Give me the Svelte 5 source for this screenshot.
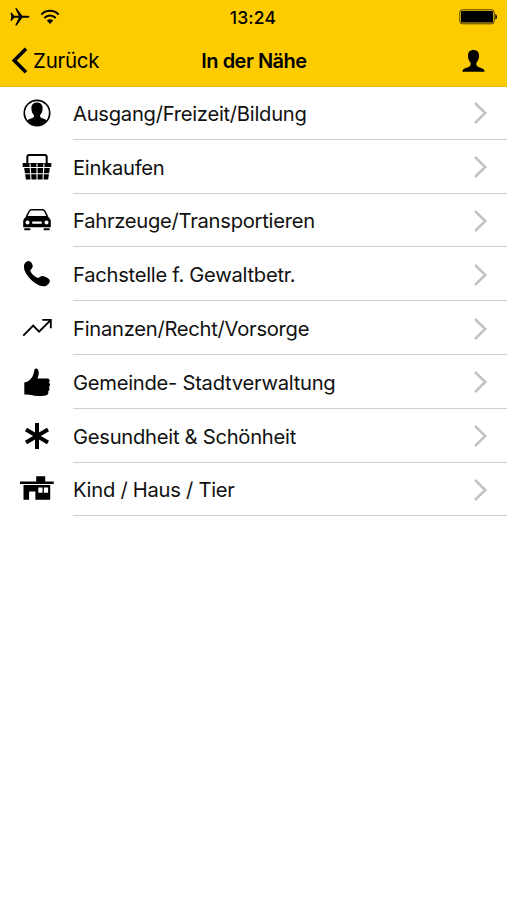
<script>
  const categories = [
    { icon: 'person', label: 'Ausgang/Freizeit/Bildung' },
    { icon: 'basket', label: 'Einkaufen' },
    { icon: 'car', label: 'Fahrzeuge/Transportieren' },
    { icon: 'phone', label: 'Fachstelle f. Gewaltbetr.' },
    { icon: 'chart', label: 'Finanzen/Recht/Vorsorge' },
    { icon: 'thumb', label: 'Gemeinde- Stadtverwaltung' },
    { icon: 'asterisk', label: 'Gesundheit & Schönheit' },
    { icon: 'house', label: 'Kind / Haus / Tier' }
  ]
</script>

<div class="screen">
  <header>
    <div class="status">
      <div class="signals">
        <svg width="20" height="20" viewBox="0 0 20 20">
          <path d="M.5 5.800h1.300l2.400 3h4.600L5.200 1.200h1.500l5.600 7.600h4.600c1.400 0 2.600.4 2.600 1s-1.200 1-2.600 1h-4.600l-5.600 7.600H5.200l3.600-7.600H4.200l-2.400 3H.5l.8-4z" />
        </svg>
        <svg width="20" height="16" viewBox="0 0 20 16">
          <g fill="none" stroke="#000" stroke-width="2">
            <path d="M1.300 5.600C6 .6 14 .6 18.700 5.600" />
            <path d="M4.300 9c3.200-3.400 8.200-3.400 11.400 0" />
          </g>
          <path d="M6.800 11.600c1.800-1.700 4.600-1.700 6.400 0L10 15z" />
        </svg>
      </div>
      <span class="time">13:24</span>
      <svg class="battery" width="39" height="16" viewBox="0 0 39 16">
        <rect x=".8" y=".8" width="34.400" height="14" rx="2.500" fill="none" stroke="#493b00" />
        <rect x="2" y="2" width="32" height="11.600" rx="1.200" />
        <path d="M36.300 5c2.200.8 2.200 4.800 0 5.600z" />
      </svg>
    </div>
    <nav>
      <button class="back">
        <svg width="17" height="27" viewBox="0 0 17 27">
          <path d="M15 1.700 3.300 13.500 15 25.300" fill="none" stroke="#000" stroke-width="3.600" />
        </svg>
        <span>Zurück</span>
      </button>
      <h1>In der Nähe</h1>
      <button class="profile" aria-label="Profil">
        <svg width="23" height="24" viewBox="0 0 23 24">
          <path d="M11.500 1c3.700 0 5.700 2.200 5.500 6-.1 3-1 5-2.600 6.700-.5 2.300.4 3.600 2.600 4.500 3.300 1.300 5.300 1.300 5.600 4.600H.4c.3-3.300 2.300-3.300 5.600-4.600 2.200-.9 3.100-2.200 2.600-4.500C7 12 6.100 10 6 7c-.2-3.800 1.800-6 5.500-6z" />
        </svg>
      </button>
    </nav>
  </header>

  <ul>
    {#each categories as category}
      <li>
        <svg class="icon" width="36" height="36" viewBox="0 0 36 36">
          {#if category.icon === 'person'}
            <circle cx="18" cy="18" r="12.700" fill="none" stroke="#000" stroke-width="1.700" />
            <path d="M18 7.600c3.900 0 5.800 2.400 5.600 6-.1 3.200-1 5-2.500 6.600-.2 1.800.4 2.400 2.200 3.100 2.200.8 3.500 1.200 4.200 2.300-4.500 6.500-14.500 6.500-19 0 .7-1.100 2-1.500 4.200-2.300 1.800-.7 2.400-1.300 2.200-3.100-1.500-1.600-2.400-3.400-2.500-6.600-.2-3.600 1.700-6 5.600-6z" />
          {:else if category.icon === 'basket'}
            <path d="M8.300 15V8q0-2 2-2h15.400q2 0 2 2v7" fill="none" stroke="#000" stroke-width="2" />
            <path d="M3.700 14h28.600v4H31l-1.900 12.500H6.900L5 18H3.700z" />
            <path d="M4 18.500h28M5 24.700h26M11 14.500l1 16.500M18 14.500V31M25 14.500 24 31" fill="none" stroke="#fff" stroke-width="1.100" />
          {:else if category.icon === 'car'}
            <path d="M7.400 14.800 10.300 9q.7-1.300 2.300-1.300h10.800q1.600 0 2.300 1.300l2.900 5.800" fill="none" stroke="#000" stroke-width="1.500" />
            <path d="M7.500 14h21l2.400 2.700q.9 1 .9 2.700v5.800H4.200v-5.800q0-1.700.9-2.700zM5.300 26.200h6v2h-6zM24.700 26.200h6v2h-6z" />
            <g fill="#fff">
              <circle cx="8.500" cy="20.500" r="2" />
              <circle cx="27.500" cy="20.500" r="2" />
              <rect x="13.200" y="19.500" width="9.600" height="2.300" rx=".5" />
            </g>
          {:else if category.icon === 'phone'}
            <path d="M5.300 8.300C6 6.500 7.800 5 9.800 5c1.800 0 3.900 3 4 5 .1 1.900-1.900 3-2.500 4.600.7 3 4.500 6.600 7.800 7.500 1.600-.5 2.600-2.200 4.500-2 2.300.2 6.400 2.300 7.100 4.200.6 1.700-1.200 4.200-3.300 5.400-2.500 1.300-6.300.6-9.700-1.600C11.400 24.100 5.800 17.600 5 12c-.2-1.300-.1-2.600.3-3.700z" />
          {:else if category.icon === 'chart'}
            <path d="m4.300 25.600 9.900-9.900 5.900 6L31.600 10.200M23.300 9.900h8.500v8.400" fill="none" stroke="#000" stroke-width="1.900" />
          {:else if category.icon === 'thumb'}
            <path d="M5.300 18.500c4-.5 6.500-3.300 8.200-6.100 1.100-1.800 1.300-3.500 1.900-6.400.3-1.700 2.500-2 3.500-.6 1.600 2.300.9 5.700-.4 9.100h9.700c2.700 0 3.200 2.700 1.600 4 1.700 1.100 1.700 3.600 0 4.500 1.300 1.300 1 3.500-.6 4.200.7 1.900-.4 4-2.500 4.300-5.400.7-10.300.9-14.400-.5-2.200-.7-4.500-.7-7-.5z" />
          {:else if category.icon === 'asterisk'}
            <path d="M18 5v26M7 11.500l22 13M29 11.500l-22 13" fill="none" stroke="#000" stroke-width="4" />
          {:else if category.icon === 'house'}
            <path d="M17.200 5.300h9v5.200h8.500v2.600H1v-2.600h16.200z" />
            <path d="M4.500 14.100h26.700v14.700H16.400v-8.300h-6.300v8.300H4.500z" />
            <path d="M19.300 16.500h4.200v5.200h-4.200zM24.900 16.500h4.200v5.200h-4.200z" fill="#fff" />
          {/if}
        </svg>
        <a href="#{category.icon}">
          <span>{category.label}</span>
          <svg class="chevron" width="15" height="24" viewBox="0 0 15 24">
            <path d="m2 2 10.300 10L2 22" fill="none" stroke="#c2c2c4" stroke-width="2.500" />
          </svg>
        </a>
      </li>
    {/each}
  </ul>
</div>

<style>
  :global(body) {
    margin: 0;
    background: #fff;
  }

  .screen {
    min-height: 900px;
    overflow: hidden;
    font-family: Inter, "Liberation Sans", sans-serif;
    color: #111;
  }

  header {
    box-sizing: border-box;
    height: 87px;
    background: #fdcc00;
    border-bottom: 1px solid #e6bc17;
    color: #000;
  }

  .status {
    display: grid;
    grid-template-columns: 1fr auto 1fr;
    align-items: center;
    height: 34px;
    padding: 0 9px 0 10px;
  }

  .signals {
    display: flex;
    align-items: center;
    gap: 10px;
  }

  .time {
    padding-right: 2px;
    font-size: 17.5px;
    font-weight: 450;
    letter-spacing: 0.2px;
  }

  .battery {
    justify-self: end;
  }

  nav {
    display: grid;
    grid-template-columns: 1fr auto 1fr;
    align-items: center;
    height: 53px;
    padding: 0 22px 0 11px;
    box-sizing: border-box;
  }

  button {
    display: flex;
    align-items: center;
    padding: 0;
    border: 0;
    background: none;
    font: inherit;
    color: inherit;
  }

  .back {
    gap: 5px;
    font-size: 20.5px;
    letter-spacing: -0.25px;
  }

  .profile {
    justify-self: end;
  }

  h1 {
    margin: 0;
    padding-left: 12px;
    font-size: 20px;
    font-weight: 600;
    letter-spacing: -0.5px;
  }

  ul {
    margin: -1px 0 0;
    padding: 0;
    list-style: none;
  }

  li {
    display: flex;
    align-items: center;
    height: 53.8px;
    padding-left: 19px;
  }

  .icon {
    flex: none;
    margin-right: 18px;
  }

  a {
    box-sizing: border-box;
    display: flex;
    flex: 1;
    align-items: center;
    justify-content: space-between;
    height: 100%;
    padding: 2px 19px 0 0;
    border-bottom: 1px solid #cfcfd1;
    font-size: 20.2px;
    letter-spacing: -0.27px;
    color: inherit;
    text-decoration: none;
  }
</style>
